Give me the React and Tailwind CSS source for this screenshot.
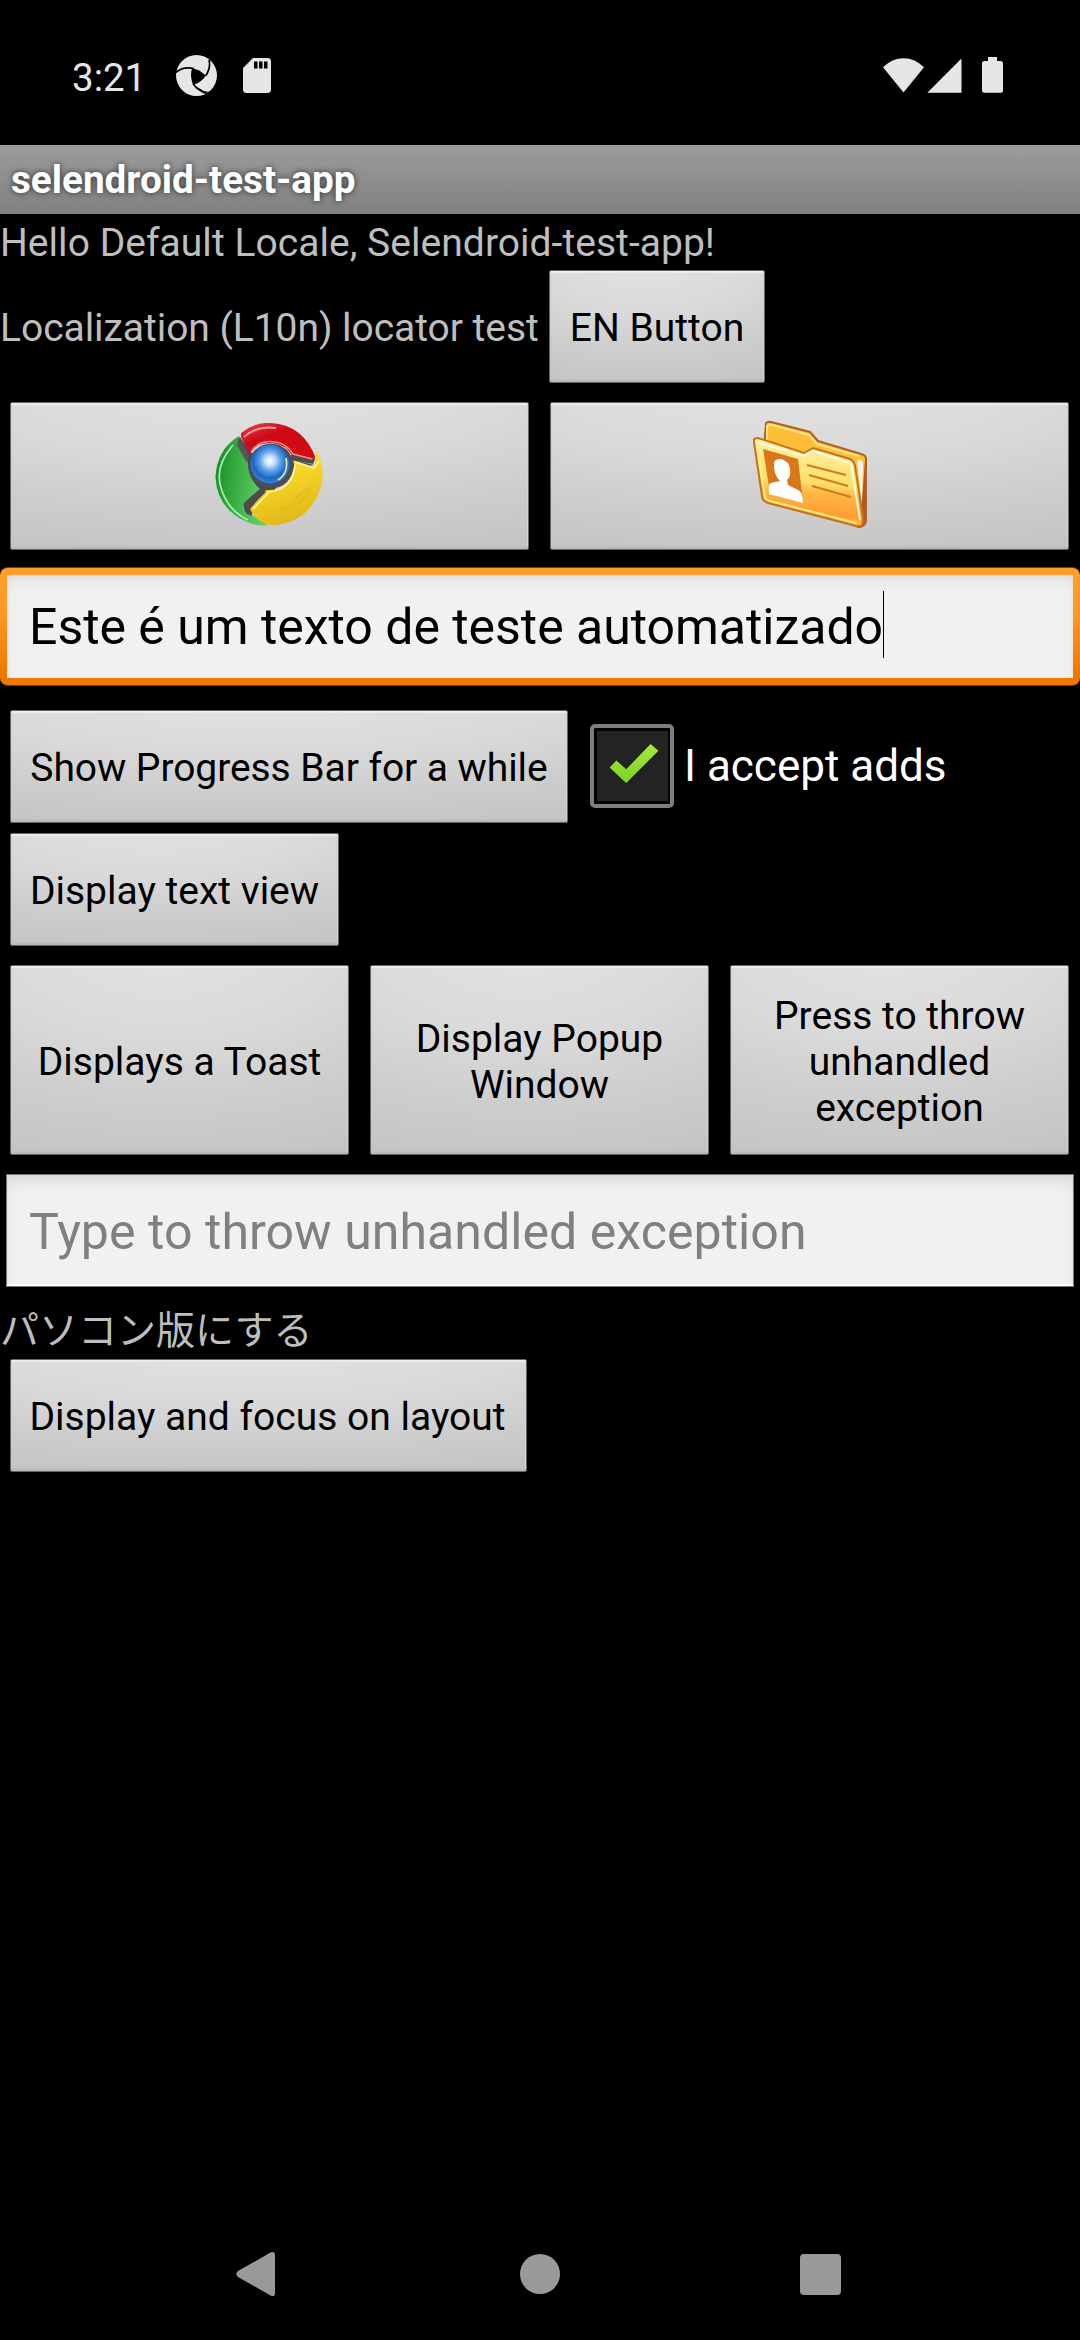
const btn =
  "shrink-0 flex items-center justify-center text-center text-black rounded-[2px] border border-[#666] bg-[radial-gradient(ellipse_130%_120%_at_45%_-12%,#e2e2e2_0%,#dadada_40%,#cdcdcd_72%,#c4c4c4_100%)] shadow-[inset_0_2px_1px_#ececec,inset_0_-2px_2px_#b8b8b8,inset_-1px_0_0_#dedede]";

function Button({ className, children }) {
  return <button className={btn + " " + className}>{children}</button>;
}

function StatusBar() {
  return (
    <header className="flex h-[145px] items-start pl-[72px] text-[#e6e6e6]">
      <span className="mt-[55px] w-[104px] text-[38.5px] leading-[46px]">3:21</span>
      <svg className="mt-[55px] h-[41px] w-[41px]" viewBox="0 0 41 41">
        <circle cx="20.5" cy="20.5" r="20.5" fill="#e6e6e6" />
        <path d="M16 13.500Q22 13.500 30 20.500Q25 28 17 29.500Q13.500 21 16 13.500Z" fill="#000" />
        <path d="M0 17.500Q7 11 18 13.500M33 5Q35 12 30 20.500M17 28.500Q22 36 31 38.500" fill="none" stroke="#000" strokeWidth="1.700" />
        <path d="M22 33Q28 38 34 37.500" fill="none" stroke="#000" strokeWidth="1" />
      </svg>
      <svg className="mt-[58px] ml-[26px] h-[35px] w-[28px]" viewBox="0 0 28 35">
        <path d="M10 0H24.500A3.500 3.500 0 0 1 28 3.500V31.500A3.500 3.500 0 0 1 24.500 35H3.500A3.500 3.500 0 0 1 0 31.500V10Z" fill="#e6e6e6" />
        <path d="M11 3.500h3.500v7H11zM16 3.500h3.500v7H16zM21 3.500h3.500v7H21z" fill="#000" />
      </svg>
      <svg className="mt-[58px] ml-[612px] h-[35px] w-[41px]" viewBox="0 0 41 35">
        <path d="M0 9.300Q9 .3 20.500 .3T41 9.300L20.500 34.500Z" fill="#e6e6e6" />
      </svg>
      <svg className="mt-[58px] ml-[3px] h-[35px] w-[35px]" viewBox="0 0 35 35">
        <path d="M34.500 .5V34.700H.3Z" fill="#e6e6e6" />
      </svg>
      <svg className="mt-[57px] ml-[20px] h-[36px] w-[21px]" viewBox="0 0 21 36">
        <path d="M6 0h9v4h3.500A2.500 2.500 0 0 1 21 6.500V33.200A2.500 2.500 0 0 1 18.500 35.700H2.500A2.500 2.500 0 0 1 0 33.200V6.500A2.500 2.500 0 0 1 2.500 4H6Z" fill="#e6e6e6" />
      </svg>
    </header>
  );
}

function ChromeIcon() {
  return (
    <svg className="h-[104px] w-[110px]" viewBox="0 0 110 104">
      <defs>
        <radialGradient id="blue" cx=".5" cy=".42" r=".55">
          <stop offset="0" stopColor="#fff" />
          <stop offset=".22" stopColor="#c9e2fa" />
          <stop offset=".5" stopColor="#5a9de6" />
          <stop offset=".8" stopColor="#1b66c4" />
          <stop offset="1" stopColor="#2f7fd8" />
        </radialGradient>
        <linearGradient id="red" x1="0" y1="0" x2=".8" y2="1">
          <stop offset="0" stopColor="#e8404a" />
          <stop offset=".4" stopColor="#cc0a16" />
          <stop offset="1" stopColor="#d30a12" />
        </linearGradient>
        <linearGradient id="green" x1="0" y1="0" x2="1" y2=".2">
          <stop offset="0" stopColor="#128a1e" />
          <stop offset=".35" stopColor="#2fa53c" />
          <stop offset="1" stopColor="#62cf68" />
        </linearGradient>
        <linearGradient id="yellow" x1="0" y1="0" x2=".3" y2="1">
          <stop offset="0" stopColor="#fbe96a" />
          <stop offset=".5" stopColor="#f3d425" />
          <stop offset="1" stopColor="#e3b91a" />
        </linearGradient>
      </defs>
      <path d="M25 14L36 30L60 32L99 42L76 46L60 66L36 92L32 87L24 50Z" fill="#4a4a4c" />
      <path d="M24 13Q2 26 .5 54Q2 86 32 99Q43 104 53 102L30 88Q26 84 30 79L45 66Q32 55 33 37Z" fill="url(#green)" />
      <path d="M24 14L34 33L32 40L22 22Z" fill="#565658" />
      <path d="M26 10Q40 -1 56 0Q89 2 101 36L77 32Q70 21 57 20Q40 20 35 31L26 14Z" fill="url(#red)" />
      <path d="M101 27Q112 47 105 67Q93 99 60 102Q42 102 35 86L51 67Q74 68 79 50Q80 44 78 37L99 44Z" fill="url(#yellow)" />
      <path d="M51 64L44 67L29 80Q27 85 32 91L37 93L34 85L50 70Z" fill="#4d4b50" />
      <path d="M76 31L100 36L98 41L76 37Z" fill="#504c4c" />
      <circle cx="56" cy="43" r="22.500" fill="#4b4e55" />
      <circle cx="55" cy="41" r="19.500" fill="url(#blue)" />
      <path d="M63 57Q74 50 71 35" fill="none" stroke="#d8eca8" strokeWidth="1.700" />
      <path d="M29 14Q42 2 61 5" fill="none" stroke="#ff9a9e" strokeWidth="2" />
      <path d="M36 29Q44 16 60 19Q71 20 78 31L97 36" fill="none" stroke="#f58b8b" strokeWidth="1.500" />
      <path d="M18 22Q-2 45 7 68Q14 88 33 97" fill="none" stroke="#a5eab0" strokeWidth="1.800" />
      <path d="M80 39L99 45L104 38M38 86L54 69Q78 66 80 42" fill="none" stroke="#fff29a" strokeWidth="1.700" />
      <path d="M66 86Q89 82 96 64M77 78L92 66" fill="none" stroke="#e5b51a" strokeWidth="2.500" opacity=".6" />
    </svg>
  );
}

function ContactsIcon() {
  return (
    <svg className="h-[110px] w-[114px]" viewBox="0 0 114 110">
      <defs>
        <linearGradient id="front" x1=".5" y1="0" x2=".4" y2="1">
          <stop offset="0" stopColor="#fff3a8" />
          <stop offset=".5" stopColor="#ffdf68" />
          <stop offset=".62" stopColor="#ffb545" />
          <stop offset=".85" stopColor="#ff9d32" />
          <stop offset="1" stopColor="#ffdc55" />
        </linearGradient>
      </defs>
      <path d="M13 3Q15 1 18 2L57 12L65 21L108 34Q113 35 113 39V101Q112 107 105 107L80 90L14 40Q11 37 11 28Z" fill="#fdbf38" stroke="#b5601b" strokeWidth="2" />
      <path d="M14 22V6Q15 4 19 5L56 15L64 24L106 36" fill="none" stroke="#ffe38a" strokeWidth="2" />
      <path d="M104 40Q110 39 110 44L109 88Z" fill="#f7f2e8" />
      <path d="M112 40V101Q111 106 106 107L109 80Z" fill="#a65d2c" />
      <path d="M1 22Q0 18 5 18L51 33L60 28L97 39Q101 41 102 46L110 98Q111 108 103 106L15 83Q9 81 9 76Z" fill="url(#front)" stroke="#c8711d" strokeWidth="2" />
      <path d="M4 22L51 36L60 31L97 43Q99 45 99 50L107 100" fill="none" stroke="#fffbe0" strokeWidth="2" />
      <path d="M5 32L12 77Q13 80 17 81L103 103" fill="none" stroke="#ffed82" strokeWidth="2" />
      <path d="M10 29L45 39L50 82L17 73Z" fill="#d9781a" />
      <path d="M21 46Q20 38 28 39Q36 41 37 49Q38 57 34 60L35 65L45 70Q50 72 50 83L16 74Q15 63 18 63L27 61Q21 55 21 46Z" fill="#fff" />
      <path d="M54 45L93 55M56 55L95 66M59 66L98 77" fill="none" stroke="#d07a1c" strokeWidth="2" />
    </svg>
  );
}

function Checkbox() {
  return (
    <span className="flex h-[84px] w-[84px] items-center justify-center rounded-[5px] border-4 border-[#7d7d7d] bg-black">
      <span className="flex h-[70px] w-[71px] items-center justify-center bg-[#232323] pb-[4px] pl-[4px]">
        <svg className="h-[41px] w-[50px]" viewBox="0 0 50 42">
          <defs>
            <linearGradient id="tick" x1="0" y1="0" x2="0" y2="1">
              <stop offset="0" stopColor="#a4e83e" />
              <stop offset="1" stopColor="#7ed321" />
            </linearGradient>
          </defs>
          <path d="M0 25L7 18L17 27L42 1L50 8L17 41Z" fill="url(#tick)" />
        </svg>
      </span>
    </span>
  );
}

function NavBar() {
  return (
    <nav className="mt-auto flex h-[132px] items-center justify-between pr-[239px] pl-[236px]">
      <svg className="h-[46px] w-[40px]" viewBox="0 0 40 46">
        <path d="M34.500 1.500Q39 -.5 39 4V42Q39 46.500 34.500 44.500L2 26Q-1.500 23 2 20Z" fill="#999" />
      </svg>
      <span className="ml-[3px] h-[40px] w-[40px] rounded-full bg-[#999]" />
      <span className="h-[41px] w-[41px] rounded-[4px] bg-[#999]" />
    </nav>
  );
}

export default function App() {
  return (
    <div className="flex h-[2340px] w-[1080px] flex-col overflow-hidden bg-black font-['Roboto','Noto_Sans_CJK_JP',sans-serif] text-[39px] leading-[46px] text-[#bebebe]">
      <StatusBar />
      <h1 className="h-[69px] bg-linear-to-b from-[#9c9c9c] to-[#808080] pl-[11px] text-[38.7px] leading-[69px] font-bold text-white [text-shadow:0_0_6px_#000000b0]">
        selendroid-test-app
      </h1>
      <p className="h-[56px] leading-[58px] tracking-[0.04px] whitespace-nowrap">Hello Default Locale, Selendroid-test-app!</p>
      <div className="flex h-[113px] items-center whitespace-nowrap">
        <span className="w-[549px] pt-[2px] tracking-[-0.05px]">Localization (L10n) locator test</span>
        <Button className="h-[113px] w-[216px] pt-[2px]">EN Button</Button>
      </div>
      <div className="mt-[19px] flex gap-[21px] pl-[10px]">
        <Button className="h-[148px] w-[519px] pb-[2px]"><ChromeIcon /></Button>
        <Button className="h-[148px] w-[519px] pb-[2px]"><ContactsIcon /></Button>
      </div>
      <div className="mt-[17px] flex h-[119px] shrink-0 rounded-[8px] border-y border-[#7a4200] bg-linear-to-b from-[#ff9d2a] from-30% to-[#f07800] to-90% px-[7px] pt-[7px] pb-[7px]">
        <div className="flex flex-1 items-center bg-[#f1f1f1] pl-[22px] text-[50px] leading-[58px] tracking-[-0.03px] whitespace-nowrap text-black shadow-[inset_0_8px_14px_-4px_#00000018,inset_0_0_2px_#ffd9a8]">
          <span>Este é um texto de teste automatizado</span>
          <span className="-mt-[4px] h-[67px] w-px bg-black" />
        </div>
      </div>
      <div className="mt-[24px] flex h-[113px] items-center pl-[10px] whitespace-nowrap">
        <Button className="h-[113px] w-[558px] pt-[2px] tracking-[-0.07px]">Show Progress Bar for a while</Button>
        <label className="ml-[22px] flex items-center pb-[2px] text-[44px] leading-[52px] text-white">
          <Checkbox />
          <span className="ml-[10px]">I accept adds</span>
        </label>
      </div>
      <div className="mt-[10px] flex pl-[10px] whitespace-nowrap">
        <Button className="h-[113px] w-[329px] pt-[2px]">Display text view</Button>
      </div>
      <div className="mt-[19px] flex gap-[21px] pl-[10px]">
        <Button className="h-[190px] w-[339px] pt-[3px]">Displays a Toast</Button>
        <Button className="h-[190px] w-[339px] px-[20px] pt-[3px]">Display Popup Window</Button>
        <Button className="h-[190px] w-[339px] px-[20px] pt-[3px]">Press to throw unhandled exception</Button>
      </div>
      <div className="mx-[6px] mt-[19px] flex h-[113px] shrink-0 items-center border border-[#777] bg-[#f1f1f1] pt-[3px] pl-[22px] text-[50px] leading-[58px] tracking-[0.06px] whitespace-nowrap text-[#808080] shadow-[inset_0_10px_14px_-4px_#0000001c,inset_0_-3px_0_-1px_#fff]">
        Type to throw unhandled exception
      </div>
      <p className="mt-[17px] h-[55px] leading-[55px]">パソコン版にする</p>
      <div className="flex pl-[10px] whitespace-nowrap">
        <Button className="h-[113px] w-[517px] pt-[3px] pr-[2px]">Display and focus on layout</Button>
      </div>
      <NavBar />
    </div>
  );
}
